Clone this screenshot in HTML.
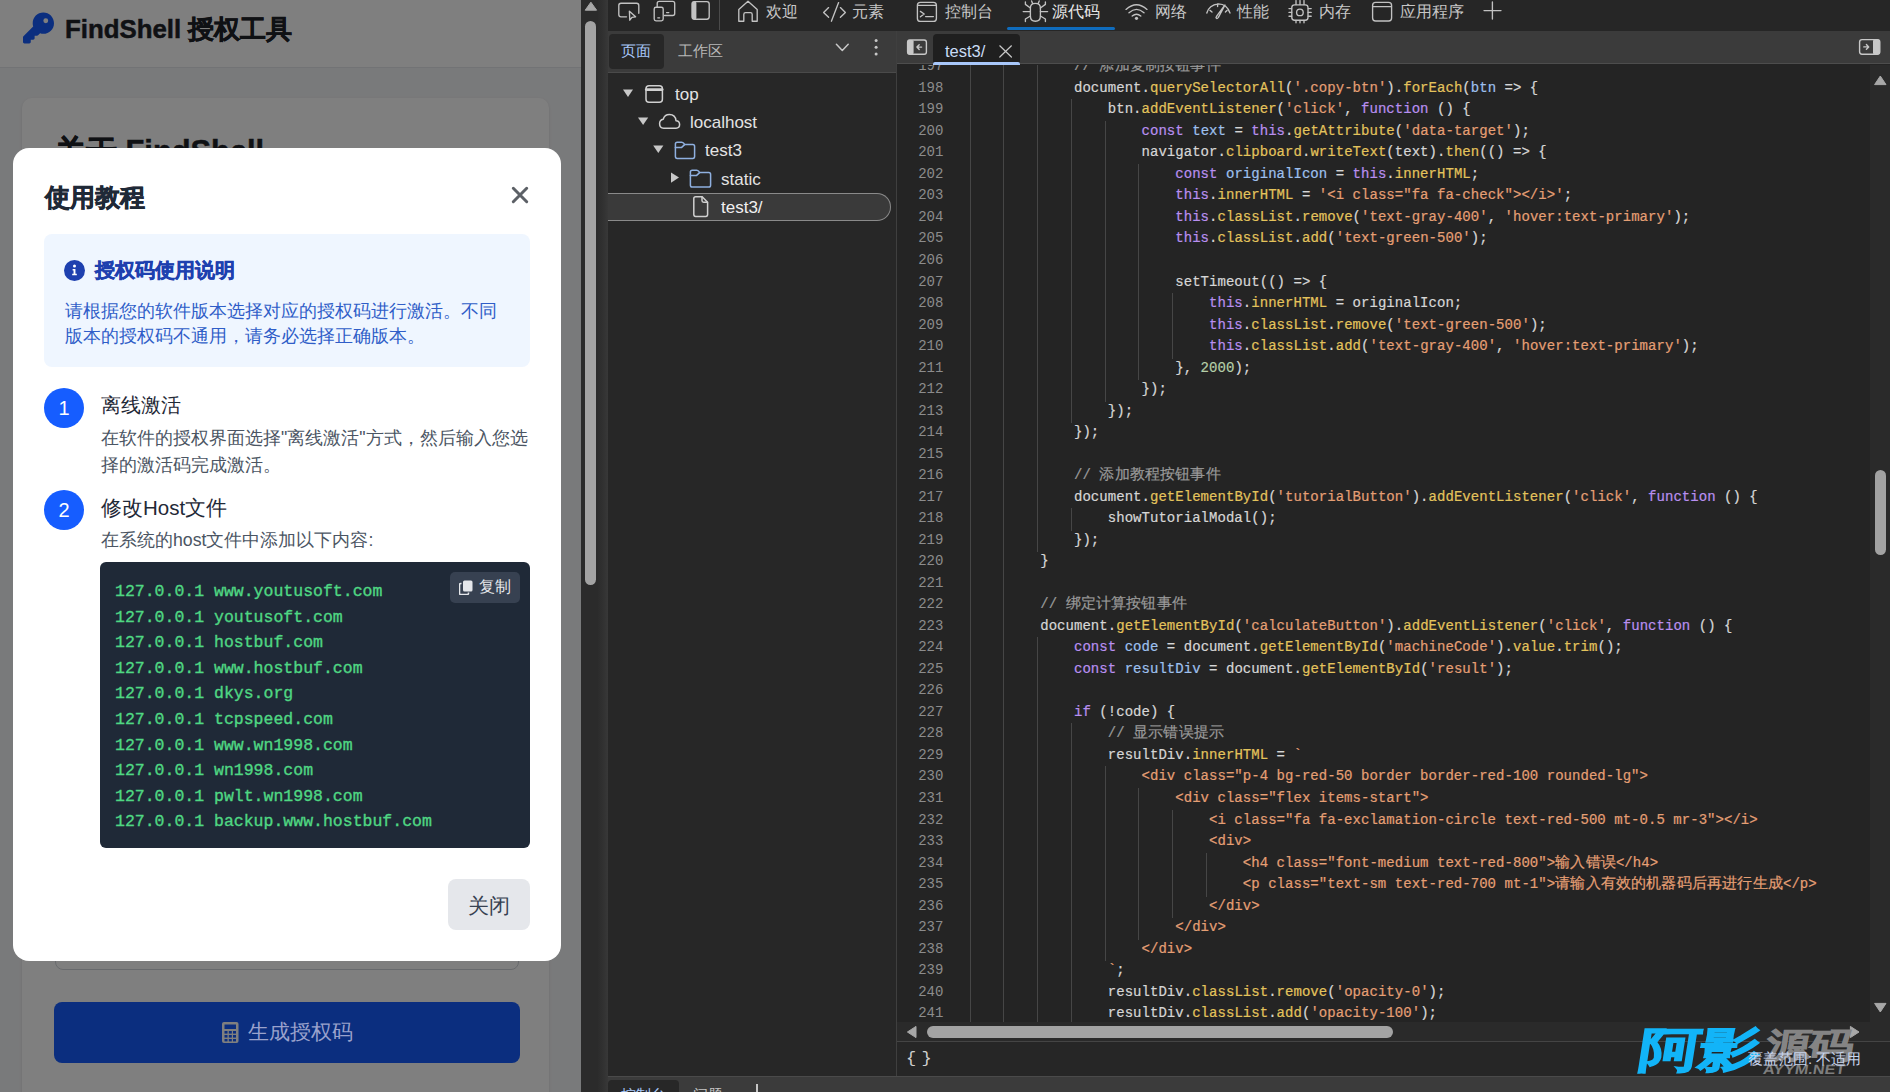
<!DOCTYPE html>
<html><head><meta charset="utf-8">
<style>
*{box-sizing:border-box;margin:0;padding:0}
html,body{width:1890px;height:1092px;overflow:hidden;background:#272727;font-family:"Liberation Sans",sans-serif}
.abs{position:absolute}
#page{position:absolute;left:0;top:0;width:581px;height:1092px;background:#f3f4f6;overflow:hidden}
#hdr{position:absolute;left:0;top:0;width:581px;height:68px;background:#fff;border-bottom:1px solid #e5e7eb}
#overlay{position:absolute;left:0;top:0;width:581px;height:1092px;background:rgba(0,0,0,0.5)}
#modal{position:absolute;left:13px;top:148px;width:548px;height:813px;background:#fff;border-radius:16px}
.t{position:absolute;white-space:nowrap;line-height:1}

#cm .ln{position:absolute;left:0;width:973px;height:21.52px}
#cm s{position:absolute;right:auto;left:0;width:46.5px;text-align:right;text-decoration:none;font-family:'Liberation Mono',monospace;font-size:14.0px;line-height:21.52px;color:#8c8c8c;letter-spacing:0.04px}
#cm u{position:absolute;top:0;width:1px;height:22.5px;background:#464646}
#cm p{position:absolute;left:75.7px;top:0;white-space:pre;font-family:'Liberation Mono',monospace;font-size:14.0px;line-height:21.52px;color:#d6d6d6;letter-spacing:0.04px;-webkit-text-stroke:0.2px currentColor}
#cm b{font-weight:normal}
#cm i.z{font-style:normal;font-size:15.2px;letter-spacing:0;display:inline-block;width:15.2px;line-height:1}
</style></head><body>
<div id="page">
  <div id="hdr">
    <svg class="abs" style="left:23px;top:12px" width="31" height="32" viewBox="0 0 512 512"><path fill="#165DFF" d="M336 352c97.2 0 176-78.8 176-176S433.2 0 336 0 160 78.8 160 176c0 18.700 2.900 36.800 8.300 53.700L7 391c-4.500 4.500-7 10.600-7 17v80c0 13.300 10.700 24 24 24h80c13.300 0 24-10.700 24-24v-40h40c13.300 0 24-10.700 24-24v-40h40c6.400 0 12.500-2.500 17-7l33.300-33.300c16.900 5.400 35 8.300 53.700 8.300zm40-256a40 40 0 1 1 0 80 40 40 0 1 1 0-80z"/></svg>
    <div class="t" style="left:65px;top:17px;font-size:25.8px;font-weight:bold;color:#1f2329;-webkit-text-stroke:0.5px #1f2329">FindShell 授权工具</div>
  </div>
  <div class="abs" style="left:22px;top:98px;width:527px;height:1100px;background:#fff;border-radius:10px;box-shadow:0 1px 3px rgba(0,0,0,0.1)"></div>
  <div class="t" style="left:55px;top:137px;font-size:30.8px;font-weight:bold;color:#1f2329;-webkit-text-stroke:0.5px #1f2329">关于 FindShell</div>
  <div class="abs" style="left:55px;top:900px;width:464px;height:70px;border:1px solid #d1d5db;border-radius:8px"></div>
  <div class="abs" style="left:54px;top:1002px;width:466px;height:61px;background:#165DFF;border-radius:8px"></div>
  <svg class="abs" style="left:222px;top:1022px" width="17" height="21" viewBox="0 0 17 21"><rect x="0" y="0" width="16.5" height="21" rx="2" fill="#fff"/><rect x="2.5" y="2.5" width="11.5" height="4.5" fill="#165DFF"/><g fill="#165DFF"><rect x="2.5" y="9" width="3" height="2.6"/><rect x="6.8" y="9" width="3" height="2.6"/><rect x="11" y="9" width="3" height="2.6"/><rect x="2.5" y="13" width="3" height="2.6"/><rect x="6.8" y="13" width="3" height="2.6"/><rect x="11" y="13" width="3" height="2.6"/><rect x="2.5" y="17" width="3" height="2.4"/><rect x="6.8" y="17" width="3" height="2.4"/><rect x="11" y="17" width="3" height="2.4"/></g></svg>
  <div id="overlay"></div>
  <div class="t" style="left:248px;top:1022px;font-size:20.5px;color:#9aa2cc">生成授权码</div>
  <div id="modal">
    <div class="t" style="left:31.5px;top:36.5px;font-size:25px;font-weight:bold;color:#1f2937;-webkit-text-stroke:0.6px #1f2937">使用教程</div>
    <svg class="abs" style="left:498px;top:38px" width="18" height="18" viewBox="0 0 18 18"><path d="M2.3 2.3L15.7 15.7M15.7 2.3L2.3 15.7" stroke="#5c6066" stroke-width="3" stroke-linecap="round"/></svg>
    <div class="abs" style="left:31px;top:86px;width:486px;height:133px;background:#eff6ff;border-radius:8px">
      <svg class="abs" style="left:20px;top:26px" width="21" height="21" viewBox="0 0 20 20"><circle cx="10" cy="10" r="10" fill="#1e40af"/><path d="M8.2 8.6H10.9V13.2H12.2V14.6H7.8V13.2H9.1V10H8.2Z" fill="#fff"/><circle cx="10" cy="5.8" r="1.45" fill="#fff"/></svg>
      <div class="t" style="left:51px;top:26px;font-size:20.4px;font-weight:bold;color:#1e40af;-webkit-text-stroke:0.5px #1e40af">授权码使用说明</div>
      <div class="abs" style="left:21px;top:64px;width:470px;white-space:nowrap;font-size:18.3px;line-height:25.3px;color:#305ec8">请根据您的软件版本选择对应的授权码进行激活。不同<br>版本的授权码不通用，请务必选择正确版本。</div>
    </div>
    <div class="abs" style="left:31px;top:240px;width:40px;height:40px;border-radius:20px;background:#165DFF;color:#fff;font-size:20px;line-height:40px;text-align:center">1</div>
    <div class="t" style="left:88px;top:248px;font-size:19.8px;color:#1f2937">离线激活</div>
    <div class="abs" style="left:88px;top:277px;width:440px;white-space:nowrap;font-size:17.7px;line-height:27.3px;color:#4b5563">在软件的授权界面选择"离线激活"方式，然后输入您选<br>择的激活码完成激活。</div>
    <div class="abs" style="left:31px;top:342px;width:40px;height:40px;border-radius:20px;background:#165DFF;color:#fff;font-size:20px;line-height:40px;text-align:center">2</div>
    <div class="t" style="left:88px;top:350px;font-size:20.5px;color:#1f2937">修改Host文件</div>
    <div class="abs" style="left:88px;top:379px;width:440px;white-space:nowrap;font-size:17.7px;line-height:27px;color:#4b5563">在系统的host文件中添加以下内容:</div>
    <div class="abs" style="left:87px;top:414px;width:430px;height:286px;background:#1f2937;border-radius:6px">
      <div class="abs" style="left:15px;top:17px;font-family:'Liberation Mono',monospace;font-size:16.5px;line-height:25.6px;color:#4fd783;white-space:pre;-webkit-text-stroke:0.35px #4fd783">127.0.0.1 www.youtusoft.com
127.0.0.1 youtusoft.com
127.0.0.1 hostbuf.com
127.0.0.1 www.hostbuf.com
127.0.0.1 dkys.org
127.0.0.1 tcpspeed.com
127.0.0.1 www.wn1998.com
127.0.0.1 wn1998.com
127.0.0.1 pwlt.wn1998.com
127.0.0.1 backup.www.hostbuf.com</div>
      <div class="abs" style="left:350px;top:10px;width:70px;height:31px;background:#374151;border-radius:5px">
        <svg class="abs" style="left:9px;top:8px" width="14" height="15" viewBox="0 0 14 15"><rect x="4" y="0.5" width="9.5" height="11" rx="1.5" fill="#e5e7eb"/><path d="M2.5 3.5H1.8Q0.5 3.5 0.5 4.8V13.2Q0.5 14.5 1.8 14.5H8.2Q9.5 14.5 9.5 13.2V12.5" stroke="#e5e7eb" stroke-width="1.6" fill="none"/></svg>
        <div class="t" style="left:29px;top:7px;font-size:16px;color:#e5e7eb">复制</div>
      </div>
    </div>
    <div class="abs" style="left:435px;top:731px;width:82px;height:51px;background:#e5e7eb;border-radius:8px"></div>
    <div class="t" style="left:455px;top:748px;font-size:20.5px;color:#374151">关闭</div>
  </div>
</div>
<div class="abs" style="left:581px;top:0;width:17px;height:1092px;background:#2b2b2b"></div>
<div class="abs" style="left:585px;top:21px;width:11px;height:564px;background:#a3a3a3;border-radius:6px"></div>
<div class="abs" style="left:598px;top:0;width:10px;height:1092px;background:linear-gradient(90deg,#2c2c2c,#303030 40%,#383838)"></div>
<svg class="abs" style="left:581px;top:0" width="17" height="14"><path d="M4.2 10.2L9.9 2.2L15.6 10.2Z" fill="#a8a8a8" stroke="#a8a8a8" stroke-linejoin="round"/></svg>

<div id="dt" class="abs" style="left:608px;top:0;width:1282px;height:1092px;background:#272727;font-family:'Liberation Sans',sans-serif">
  <!-- toolbar -->
  <div class="abs" style="left:0;top:0;width:1282px;height:31px;background:#262626"></div>
  <div class="abs" style="left:111px;top:0;width:1px;height:30px;background:#4a4a4a"></div>

  <svg class="abs" style="left:0;top:0" width="1282" height="31" viewBox="608 0 1282 31" fill="none" stroke="#c2c2c2" stroke-width="1.35" stroke-linecap="round" stroke-linejoin="round">
    <path d="M626.5 16.8H621Q618.8 16.8 618.8 14.6V5.4Q618.8 3.2 621 3.2H636.6Q638.8 3.2 638.8 5.4V13.2"/>
    <path d="M629.4 11.2L635.6 16.8L632 17.4L629.8 20.2Z"/>
    <path d="M657.2 7V3.4Q657.2 1.4 659.2 1.4H672.7Q674.7 1.4 674.7 3.4V13.5Q674.7 15.5 672.7 15.5H664.5"/>
    <rect x="654.2" y="7.2" width="9" height="13.6" rx="1.8"/>
    <path d="M657.8 17.8H659.6M666.6 12.6H668.8"/>
    <rect x="692" y="1.6" width="17.2" height="17.6" rx="2.4"/>
    <rect x="692" y="1.6" width="4.4" height="17.6" fill="#c2c2c2" stroke="none" rx="1.5"/>
    <path d="M738.8 21.2V9.4L748 1.2L757.2 9.4V21.2H752.2V14.4Q752.2 12.6 750.4 12.6H745.6Q743.8 12.6 743.8 14.4V21.2Z"/>
    <path d="M828.6 7.6L823.6 12.4L828.6 17.2M840.4 7.6L845.4 12.4L840.4 17.2M838.6 2.6L831.4 21.2"/>
    <rect x="917.4" y="2.4" width="19" height="19" rx="3"/>
    <path d="M917.6 5.4H936.2M920.4 11.4L924.2 14L920.4 16.8M925.6 16.6H933.4"/>
    <path d="M1030.4 8Q1030.4 3.4 1035.4 3.4Q1040.4 3.4 1040.4 8V16Q1040.4 21.2 1035.4 21.2Q1030.4 21.2 1030.4 16Z"/>
    <path d="M1032.6 3.6L1031.6 1M1038.2 3.6L1039.2 1M1030.4 8L1025.4 4.4V2M1040.4 8L1045.4 4.4V2M1023.2 11.6H1030.4M1040.4 11.6H1047.6M1030.4 16L1025.4 19V21.6M1040.4 16L1045.4 19V21.6"/>
    <path d="M1126 9.4Q1136.5 0 1147 9.4M1129 12.8Q1136.5 6 1144 12.8M1132.2 16Q1136.5 12.4 1140.8 16"/>
    <circle cx="1136.5" cy="18.3" r="1.6" fill="#c2c2c2" stroke="none"/>
    <path d="M1206.8 13Q1209 5 1218.4 3.8Q1227 4 1230 13M1210 10.4L1212 12M1217.6 4V6.6M1227 10.4L1225.4 12"/>
    <path d="M1225 5L1218.4 17.4Q1216.6 19.6 1216 17.6L1217 15.6Z" fill="none"/>
    <rect x="1291.8" y="4.8" width="16.2" height="15.4" rx="2.8"/>
    <circle cx="1299.9" cy="12.4" r="3.3"/>
    <path d="M1296 0.6V4.6M1300 0.6V4.6M1304 0.6V4.6M1296 20.4V22.8M1300 20.4V22.8M1304 20.4V22.8M1289 8.6H1291.6M1289 12.4H1291.6M1289 16.2H1291.6M1308.2 8.6H1311.2M1308.2 12.4H1311.2M1308.2 16.2H1311.2"/>
    <rect x="1372.6" y="2.4" width="19" height="18.6" rx="3"/>
    <path d="M1372.8 6.6H1391.4M1492.4 2V19M1484 10.6H1501"/>
  </svg>
  <div id="tbtext">
    <div class="t" style="left:158px;top:3.5px;font-size:15.7px;color:#c6c6c6">欢迎</div>
    <div class="t" style="left:244px;top:3.5px;font-size:15.7px;color:#c6c6c6">元素</div>
    <div class="t" style="left:337px;top:3.5px;font-size:15.7px;color:#c6c6c6">控制台</div>
    <div class="t" style="left:444px;top:3.5px;font-size:15.7px;color:#e8e8e8">源代码</div>
    <div class="t" style="left:547px;top:3.5px;font-size:15.7px;color:#c6c6c6">网络</div>
    <div class="t" style="left:629px;top:3.5px;font-size:15.7px;color:#c6c6c6">性能</div>
    <div class="t" style="left:711px;top:3.5px;font-size:15.7px;color:#c6c6c6">内存</div>
    <div class="t" style="left:792px;top:3.5px;font-size:15.7px;color:#c6c6c6">应用程序</div>
  </div>
  <div class="abs" style="left:399px;top:27px;width:108px;height:3px;background:#0f6cbd;border-radius:2px"></div>
  <!-- sidebar -->
  <div class="abs" style="left:0;top:31px;width:288px;height:42px;background:#3b3b3b;border-bottom:1px solid #4a4a4a"></div>
  <div class="abs" style="left:1px;top:34px;width:55px;height:35px;background:#272727;border-radius:4px"></div>
  <div class="t" style="left:13px;top:43px;font-size:15.3px;color:#a8c7fa">页面</div>
  <div class="t" style="left:70px;top:43px;font-size:15.3px;color:#b8b8b8">工作区</div>

  <svg class="abs" style="left:0;top:31px" width="288" height="41" viewBox="608 31 288 41" fill="none" stroke="#c8c8c8" stroke-width="1.5" stroke-linecap="round" stroke-linejoin="round">
    <path d="M836.4 44.2L842.3 50.4L848.2 44.2"/>
    <circle cx="876.1" cy="40.6" r="1.5" fill="#c8c8c8" stroke="none"/><circle cx="876.1" cy="47.2" r="1.5" fill="#c8c8c8" stroke="none"/><circle cx="876.1" cy="53.9" r="1.5" fill="#c8c8c8" stroke="none"/>
  </svg>
  <div class="abs" style="left:0;top:193px;width:283px;height:28px;background:#3a3a3a;border:1.5px solid #8a8a8a;border-left:none;border-radius:0 14px 14px 0"></div>
  <svg class="abs" style="left:0;top:72px" width="288" height="160" viewBox="608 72 288 160" fill="none" stroke="#d0d0d0" stroke-width="1.5" stroke-linecap="round" stroke-linejoin="round">
    <path d="M623 89.4H633L628 97Z" fill="#c8c8c8" stroke="none"/>
    <path d="M638 117.4H648.2L643.1 125Z" fill="#c8c8c8" stroke="none"/>
    <path d="M653.2 145.4H663.4L658.3 153Z" fill="#c8c8c8" stroke="none"/>
    <path d="M671 172.4V182.8L679 177.6Z" fill="#c8c8c8" stroke="none"/>
    <rect x="646" y="85.8" width="16.4" height="16.4" rx="3"/>
    <path d="M646.2 89.6H662.2" stroke-width="2.6"/>
    <path d="M663.6 128.2H676Q679.6 128.2 679.6 124.6Q679.6 121 676 120.8Q675.4 114.6 669.4 114.6Q664.6 114.6 663.2 119.2Q659.6 119.8 659.6 123.8Q659.6 128.2 663.6 128.2Z"/>
    <path d="M675.4 145.2V144Q675.4 142.2 677.2 142.2H681.6Q683 142.2 683.8 143.4L684.6 144.6H692.8Q694.6 144.6 694.6 146.4V156.6Q694.6 158.4 692.8 158.4H677.2Q675.4 158.4 675.4 156.6Z" stroke="#8fb0e0"/>
    <path d="M675.4 147.6H681.4L684.6 144.6" stroke="#8fb0e0"/>
    <path d="M690.4 173.2V172Q690.4 170.2 692.2 170.2H696.6Q698 170.2 698.8 171.4L699.6 172.6H708.8Q710.6 172.6 710.6 174.4V185.2Q710.6 187 708.8 187H692.2Q690.4 187 690.4 185.2Z" stroke="#8fb0e0"/>
    <path d="M690.4 175.6H696.4L699.6 172.6" stroke="#8fb0e0"/>
    <path d="M693.8 198.6Q693.8 196.8 695.6 196.8H702.2L707.6 202.2V214.6Q707.6 216.4 705.8 216.4H695.6Q693.8 216.4 693.8 214.6Z"/>
    <path d="M702 197V200.6Q702 202.2 703.6 202.2H707.4"/>
  </svg>
  <div class="t" style="left:67px;top:86px;font-size:17px;color:#e3e3e3">top</div>
  <div class="t" style="left:82px;top:114px;font-size:17px;color:#e3e3e3">localhost</div>
  <div class="t" style="left:97px;top:142px;font-size:17px;color:#e3e3e3">test3</div>
  <div class="t" style="left:113px;top:170.5px;font-size:17px;color:#e3e3e3">static</div>
  <div class="t" style="left:113px;top:198.5px;font-size:17px;color:#f0f0f0">test3/</div>
  <div class="abs" style="left:288px;top:31px;width:1px;height:1045px;background:#3f3f3f"></div>
  <!-- editor -->
  <div id="ed" class="abs" style="left:289px;top:31px;width:993px;height:1045px;background:#242424;overflow:hidden">
    <div class="abs" style="left:0;top:0;width:993px;height:33px;background:#3b3b3b;border-bottom:1px solid #4d4d4d"></div>
    <div class="abs" style="left:36px;top:3px;width:87px;height:31px;background:#1f1f1f;border-radius:4px 4px 0 0"></div>
    <div class="abs" style="left:36px;top:31px;width:87px;height:3px;background:#a8c7fa;border-radius:2px 2px 0 0"></div>

    <svg class="abs" style="left:0;top:0" width="993" height="34" viewBox="897 31 993 34" fill="none" stroke="#c8c8c8" stroke-width="1.4" stroke-linecap="round" stroke-linejoin="round">
      <rect x="907.6" y="40" width="18.8" height="14.2" rx="2.2"/>
      <rect x="907.6" y="40" width="6" height="14.2" rx="1.5" fill="#c8c8c8" stroke="none"/>
      <path d="M921.6 47.1H917M919.2 44.8L916.9 47.1L919.2 49.4"/>
      <path d="M999.8 45.8L1011.4 57M1011.4 45.8L999.8 57" stroke-width="1.2"/>
      <rect x="1859.6" y="39.6" width="20.2" height="14.6" rx="2.4"/>
      <rect x="1873" y="39.6" width="6.8" height="14.6" rx="1.5" fill="#c8c8c8" stroke="none"/>
      <path d="M1863.8 46.9H1868.6M1866.4 44.6L1868.7 46.9L1866.4 49.2"/>
    </svg>
    <div class="t" style="left:48px;top:12px;font-size:16.5px;color:#c9dcf5">test3/</div>
    <div id="cm" class="abs" style="left:0;top:34px;width:973px;height:957px;overflow:hidden"><div class="ln" style="top:-8.70px"><s>197</s><u style="left:72.50px"></u><u style="left:106.26px"></u><u style="left:140.02px"></u><p>            <b style="color:#9a9a9a">// <i class="z">添</i><i class="z">加</i><i class="z">复</i><i class="z">制</i><i class="z">按</i><i class="z">钮</i><i class="z">事</i><i class="z">件</i></b></p></div><div class="ln" style="top:12.82px"><s>198</s><u style="left:72.50px"></u><u style="left:106.26px"></u><u style="left:140.02px"></u><p>            document.<b style="color:#e3c35c">querySelectorAll</b>(<b style="color:#e59f74">&#x27;.copy-btn&#x27;</b>).<b style="color:#e3c35c">forEach</b>(<b style="color:#9ec0ee">btn</b> =&gt; {</p></div><div class="ln" style="top:34.34px"><s>199</s><u style="left:72.50px"></u><u style="left:106.26px"></u><u style="left:140.02px"></u><u style="left:173.78px"></u><p>                btn.<b style="color:#e3c35c">addEventListener</b>(<b style="color:#e59f74">&#x27;click&#x27;</b>, <b style="color:#b98ff0">function</b> () {</p></div><div class="ln" style="top:55.86px"><s>200</s><u style="left:72.50px"></u><u style="left:106.26px"></u><u style="left:140.02px"></u><u style="left:173.78px"></u><u style="left:207.54px"></u><p>                    <b style="color:#b98ff0">const</b> <b style="color:#9ec0ee">text</b> = <b style="color:#b98ff0">this</b>.<b style="color:#e3c35c">getAttribute</b>(<b style="color:#e59f74">&#x27;data-target&#x27;</b>);</p></div><div class="ln" style="top:77.38px"><s>201</s><u style="left:72.50px"></u><u style="left:106.26px"></u><u style="left:140.02px"></u><u style="left:173.78px"></u><u style="left:207.54px"></u><p>                    navigator.<b style="color:#e3c35c">clipboard</b>.<b style="color:#e3c35c">writeText</b>(text).<b style="color:#e3c35c">then</b>(() =&gt; {</p></div><div class="ln" style="top:98.90px"><s>202</s><u style="left:72.50px"></u><u style="left:106.26px"></u><u style="left:140.02px"></u><u style="left:173.78px"></u><u style="left:207.54px"></u><u style="left:241.30px"></u><p>                        <b style="color:#b98ff0">const</b> <b style="color:#9ec0ee">originalIcon</b> = <b style="color:#b98ff0">this</b>.<b style="color:#e3c35c">innerHTML</b>;</p></div><div class="ln" style="top:120.42px"><s>203</s><u style="left:72.50px"></u><u style="left:106.26px"></u><u style="left:140.02px"></u><u style="left:173.78px"></u><u style="left:207.54px"></u><u style="left:241.30px"></u><p>                        <b style="color:#b98ff0">this</b>.<b style="color:#e3c35c">innerHTML</b> = <b style="color:#e59f74">&#x27;&lt;i class=&quot;fa fa-check&quot;&gt;&lt;/i&gt;&#x27;</b>;</p></div><div class="ln" style="top:141.94px"><s>204</s><u style="left:72.50px"></u><u style="left:106.26px"></u><u style="left:140.02px"></u><u style="left:173.78px"></u><u style="left:207.54px"></u><u style="left:241.30px"></u><p>                        <b style="color:#b98ff0">this</b>.<b style="color:#e3c35c">classList</b>.<b style="color:#e3c35c">remove</b>(<b style="color:#e59f74">&#x27;text-gray-400&#x27;</b>, <b style="color:#e59f74">&#x27;hover:text-primary&#x27;</b>);</p></div><div class="ln" style="top:163.46px"><s>205</s><u style="left:72.50px"></u><u style="left:106.26px"></u><u style="left:140.02px"></u><u style="left:173.78px"></u><u style="left:207.54px"></u><u style="left:241.30px"></u><p>                        <b style="color:#b98ff0">this</b>.<b style="color:#e3c35c">classList</b>.<b style="color:#e3c35c">add</b>(<b style="color:#e59f74">&#x27;text-green-500&#x27;</b>);</p></div><div class="ln" style="top:184.98px"><s>206</s><u style="left:72.50px"></u><u style="left:106.26px"></u><u style="left:140.02px"></u><u style="left:173.78px"></u><u style="left:207.54px"></u><u style="left:241.30px"></u><p></p></div><div class="ln" style="top:206.50px"><s>207</s><u style="left:72.50px"></u><u style="left:106.26px"></u><u style="left:140.02px"></u><u style="left:173.78px"></u><u style="left:207.54px"></u><u style="left:241.30px"></u><p>                        setTimeout(() =&gt; {</p></div><div class="ln" style="top:228.02px"><s>208</s><u style="left:72.50px"></u><u style="left:106.26px"></u><u style="left:140.02px"></u><u style="left:173.78px"></u><u style="left:207.54px"></u><u style="left:241.30px"></u><u style="left:275.06px"></u><p>                            <b style="color:#b98ff0">this</b>.<b style="color:#e3c35c">innerHTML</b> = originalIcon;</p></div><div class="ln" style="top:249.54px"><s>209</s><u style="left:72.50px"></u><u style="left:106.26px"></u><u style="left:140.02px"></u><u style="left:173.78px"></u><u style="left:207.54px"></u><u style="left:241.30px"></u><u style="left:275.06px"></u><p>                            <b style="color:#b98ff0">this</b>.<b style="color:#e3c35c">classList</b>.<b style="color:#e3c35c">remove</b>(<b style="color:#e59f74">&#x27;text-green-500&#x27;</b>);</p></div><div class="ln" style="top:271.06px"><s>210</s><u style="left:72.50px"></u><u style="left:106.26px"></u><u style="left:140.02px"></u><u style="left:173.78px"></u><u style="left:207.54px"></u><u style="left:241.30px"></u><u style="left:275.06px"></u><p>                            <b style="color:#b98ff0">this</b>.<b style="color:#e3c35c">classList</b>.<b style="color:#e3c35c">add</b>(<b style="color:#e59f74">&#x27;text-gray-400&#x27;</b>, <b style="color:#e59f74">&#x27;hover:text-primary&#x27;</b>);</p></div><div class="ln" style="top:292.58px"><s>211</s><u style="left:72.50px"></u><u style="left:106.26px"></u><u style="left:140.02px"></u><u style="left:173.78px"></u><u style="left:207.54px"></u><u style="left:241.30px"></u><p>                        }, <b style="color:#b5cea8">2000</b>);</p></div><div class="ln" style="top:314.10px"><s>212</s><u style="left:72.50px"></u><u style="left:106.26px"></u><u style="left:140.02px"></u><u style="left:173.78px"></u><u style="left:207.54px"></u><p>                    });</p></div><div class="ln" style="top:335.62px"><s>213</s><u style="left:72.50px"></u><u style="left:106.26px"></u><u style="left:140.02px"></u><u style="left:173.78px"></u><p>                });</p></div><div class="ln" style="top:357.14px"><s>214</s><u style="left:72.50px"></u><u style="left:106.26px"></u><u style="left:140.02px"></u><p>            });</p></div><div class="ln" style="top:378.66px"><s>215</s><u style="left:72.50px"></u><u style="left:106.26px"></u><u style="left:140.02px"></u><p></p></div><div class="ln" style="top:400.18px"><s>216</s><u style="left:72.50px"></u><u style="left:106.26px"></u><u style="left:140.02px"></u><p>            <b style="color:#9a9a9a">// <i class="z">添</i><i class="z">加</i><i class="z">教</i><i class="z">程</i><i class="z">按</i><i class="z">钮</i><i class="z">事</i><i class="z">件</i></b></p></div><div class="ln" style="top:421.70px"><s>217</s><u style="left:72.50px"></u><u style="left:106.26px"></u><u style="left:140.02px"></u><p>            document.<b style="color:#e3c35c">getElementById</b>(<b style="color:#e59f74">&#x27;tutorialButton&#x27;</b>).<b style="color:#e3c35c">addEventListener</b>(<b style="color:#e59f74">&#x27;click&#x27;</b>, <b style="color:#b98ff0">function</b> () {</p></div><div class="ln" style="top:443.22px"><s>218</s><u style="left:72.50px"></u><u style="left:106.26px"></u><u style="left:140.02px"></u><u style="left:173.78px"></u><p>                showTutorialModal();</p></div><div class="ln" style="top:464.74px"><s>219</s><u style="left:72.50px"></u><u style="left:106.26px"></u><u style="left:140.02px"></u><p>            });</p></div><div class="ln" style="top:486.26px"><s>220</s><u style="left:72.50px"></u><u style="left:106.26px"></u><p>        }</p></div><div class="ln" style="top:507.78px"><s>221</s><u style="left:72.50px"></u><u style="left:106.26px"></u><p></p></div><div class="ln" style="top:529.30px"><s>222</s><u style="left:72.50px"></u><u style="left:106.26px"></u><p>        <b style="color:#9a9a9a">// <i class="z">绑</i><i class="z">定</i><i class="z">计</i><i class="z">算</i><i class="z">按</i><i class="z">钮</i><i class="z">事</i><i class="z">件</i></b></p></div><div class="ln" style="top:550.82px"><s>223</s><u style="left:72.50px"></u><u style="left:106.26px"></u><p>        document.<b style="color:#e3c35c">getElementById</b>(<b style="color:#e59f74">&#x27;calculateButton&#x27;</b>).<b style="color:#e3c35c">addEventListener</b>(<b style="color:#e59f74">&#x27;click&#x27;</b>, <b style="color:#b98ff0">function</b> () {</p></div><div class="ln" style="top:572.34px"><s>224</s><u style="left:72.50px"></u><u style="left:106.26px"></u><u style="left:140.02px"></u><p>            <b style="color:#b98ff0">const</b> <b style="color:#9ec0ee">code</b> = document.<b style="color:#e3c35c">getElementById</b>(<b style="color:#e59f74">&#x27;machineCode&#x27;</b>).<b style="color:#e3c35c">value</b>.<b style="color:#e3c35c">trim</b>();</p></div><div class="ln" style="top:593.86px"><s>225</s><u style="left:72.50px"></u><u style="left:106.26px"></u><u style="left:140.02px"></u><p>            <b style="color:#b98ff0">const</b> <b style="color:#9ec0ee">resultDiv</b> = document.<b style="color:#e3c35c">getElementById</b>(<b style="color:#e59f74">&#x27;result&#x27;</b>);</p></div><div class="ln" style="top:615.38px"><s>226</s><u style="left:72.50px"></u><u style="left:106.26px"></u><u style="left:140.02px"></u><p></p></div><div class="ln" style="top:636.90px"><s>227</s><u style="left:72.50px"></u><u style="left:106.26px"></u><u style="left:140.02px"></u><p>            <b style="color:#b98ff0">if</b> (!code) {</p></div><div class="ln" style="top:658.42px"><s>228</s><u style="left:72.50px"></u><u style="left:106.26px"></u><u style="left:140.02px"></u><u style="left:173.78px"></u><p>                <b style="color:#9a9a9a">// <i class="z">显</i><i class="z">示</i><i class="z">错</i><i class="z">误</i><i class="z">提</i><i class="z">示</i></b></p></div><div class="ln" style="top:679.94px"><s>229</s><u style="left:72.50px"></u><u style="left:106.26px"></u><u style="left:140.02px"></u><u style="left:173.78px"></u><p>                resultDiv.<b style="color:#e3c35c">innerHTML</b> = <b style="color:#e59f74">`</b></p></div><div class="ln" style="top:701.46px"><s>230</s><u style="left:72.50px"></u><u style="left:106.26px"></u><u style="left:140.02px"></u><u style="left:173.78px"></u><u style="left:207.54px"></u><p>                    <b style="color:#e59f74">&lt;div class=&quot;p-4 bg-red-50 border border-red-100 rounded-lg&quot;&gt;</b></p></div><div class="ln" style="top:722.98px"><s>231</s><u style="left:72.50px"></u><u style="left:106.26px"></u><u style="left:140.02px"></u><u style="left:173.78px"></u><u style="left:207.54px"></u><u style="left:241.30px"></u><p>                        <b style="color:#e59f74">&lt;div class=&quot;flex items-start&quot;&gt;</b></p></div><div class="ln" style="top:744.50px"><s>232</s><u style="left:72.50px"></u><u style="left:106.26px"></u><u style="left:140.02px"></u><u style="left:173.78px"></u><u style="left:207.54px"></u><u style="left:241.30px"></u><u style="left:275.06px"></u><p>                            <b style="color:#e59f74">&lt;i class=&quot;fa fa-exclamation-circle text-red-500 mt-0.5 mr-3&quot;&gt;&lt;/i&gt;</b></p></div><div class="ln" style="top:766.02px"><s>233</s><u style="left:72.50px"></u><u style="left:106.26px"></u><u style="left:140.02px"></u><u style="left:173.78px"></u><u style="left:207.54px"></u><u style="left:241.30px"></u><u style="left:275.06px"></u><p>                            <b style="color:#e59f74">&lt;div&gt;</b></p></div><div class="ln" style="top:787.54px"><s>234</s><u style="left:72.50px"></u><u style="left:106.26px"></u><u style="left:140.02px"></u><u style="left:173.78px"></u><u style="left:207.54px"></u><u style="left:241.30px"></u><u style="left:275.06px"></u><u style="left:308.82px"></u><p>                                <b style="color:#e59f74">&lt;h4 class=&quot;font-medium text-red-800&quot;&gt;<i class="z">输</i><i class="z">入</i><i class="z">错</i><i class="z">误</i>&lt;/h4&gt;</b></p></div><div class="ln" style="top:809.06px"><s>235</s><u style="left:72.50px"></u><u style="left:106.26px"></u><u style="left:140.02px"></u><u style="left:173.78px"></u><u style="left:207.54px"></u><u style="left:241.30px"></u><u style="left:275.06px"></u><u style="left:308.82px"></u><p>                                <b style="color:#e59f74">&lt;p class=&quot;text-sm text-red-700 mt-1&quot;&gt;<i class="z">请</i><i class="z">输</i><i class="z">入</i><i class="z">有</i><i class="z">效</i><i class="z">的</i><i class="z">机</i><i class="z">器</i><i class="z">码</i><i class="z">后</i><i class="z">再</i><i class="z">进</i><i class="z">行</i><i class="z">生</i><i class="z">成</i>&lt;/p&gt;</b></p></div><div class="ln" style="top:830.58px"><s>236</s><u style="left:72.50px"></u><u style="left:106.26px"></u><u style="left:140.02px"></u><u style="left:173.78px"></u><u style="left:207.54px"></u><u style="left:241.30px"></u><u style="left:275.06px"></u><p>                            <b style="color:#e59f74">&lt;/div&gt;</b></p></div><div class="ln" style="top:852.10px"><s>237</s><u style="left:72.50px"></u><u style="left:106.26px"></u><u style="left:140.02px"></u><u style="left:173.78px"></u><u style="left:207.54px"></u><u style="left:241.30px"></u><p>                        <b style="color:#e59f74">&lt;/div&gt;</b></p></div><div class="ln" style="top:873.62px"><s>238</s><u style="left:72.50px"></u><u style="left:106.26px"></u><u style="left:140.02px"></u><u style="left:173.78px"></u><u style="left:207.54px"></u><p>                    <b style="color:#e59f74">&lt;/div&gt;</b></p></div><div class="ln" style="top:895.14px"><s>239</s><u style="left:72.50px"></u><u style="left:106.26px"></u><u style="left:140.02px"></u><u style="left:173.78px"></u><p>                <b style="color:#e59f74">`</b>;</p></div><div class="ln" style="top:916.66px"><s>240</s><u style="left:72.50px"></u><u style="left:106.26px"></u><u style="left:140.02px"></u><u style="left:173.78px"></u><p>                resultDiv.<b style="color:#e3c35c">classList</b>.<b style="color:#e3c35c">remove</b>(<b style="color:#e59f74">&#x27;opacity-0&#x27;</b>);</p></div><div class="ln" style="top:938.18px"><s>241</s><u style="left:72.50px"></u><u style="left:106.26px"></u><u style="left:140.02px"></u><u style="left:173.78px"></u><p>                resultDiv.<b style="color:#e3c35c">classList</b>.<b style="color:#e3c35c">add</b>(<b style="color:#e59f74">&#x27;opacity-100&#x27;</b>);</p></div></div>
    <div class="abs" style="left:973px;top:34px;width:20px;height:957px;background:#2a2a2a"></div>
    <svg class="abs" style="left:973px;top:34px" width="20" height="957" viewBox="1870 65 20 957"><path d="M1874.6 84.6L1880.3 76L1886 84.6Z" fill="#a8a8a8" stroke="#a8a8a8" stroke-width="1" stroke-linejoin="round"/><path d="M1874.6 1003.4L1880.3 1012L1886 1003.4Z" fill="#a8a8a8" stroke="#a8a8a8" stroke-width="1" stroke-linejoin="round"/></svg>
    <div class="abs" style="left:977.5px;top:438.5px;width:11.5px;height:85px;background:#a3a3a3;border-radius:6px"></div>
    <div class="abs" style="left:0;top:991px;width:993px;height:19px;background:#2a2a2a"></div>
    <svg class="abs" style="left:0;top:991px" width="993" height="19" viewBox="897 1022 993 19"><path d="M916 1026.4L907.4 1032L916 1037.6Z" fill="#a8a8a8" stroke="#a8a8a8" stroke-width="1" stroke-linejoin="round"/><path d="M1850.4 1026.4L1859 1032L1850.4 1037.6Z" fill="#a8a8a8" stroke="#a8a8a8" stroke-width="1" stroke-linejoin="round"/></svg>
    <div class="abs" style="left:29.5px;top:995px;width:466px;height:11.5px;background:#a3a3a3;border-radius:6px"></div>
    <div class="abs" style="left:0;top:1010px;width:993px;height:1px;background:#444"></div>
    <div class="abs" style="left:0;top:1011px;width:993px;height:34px;background:#262626"></div>
    <div class="t" style="left:9px;top:1019px;font-family:'Liberation Mono',monospace;font-size:17px;color:#d0d0d0;letter-spacing:-2.5px">{ }</div>

  </div>
  <!-- bottom drawer -->
  <div class="abs" style="left:0;top:1076px;width:1282px;height:16px;background:#3b3b3b;border-top:1px solid #4a4a4a"></div>
  <div class="abs" style="left:0;top:1080px;width:71px;height:20px;background:#272727;border-radius:4px"></div>
  <div class="t" style="left:13px;top:1087px;font-size:15.3px;color:#a8c7fa">控制台</div>
  <div class="t" style="left:85px;top:1087px;font-size:15.3px;color:#c6c6c6">问题</div>
  <div class="abs" style="left:148px;top:1084px;width:1.5px;height:10px;background:#c6c6c6"></div>
</div>

<div class="abs" style="left:1636px;top:1026px;font-size:47px;font-weight:bold;color:#12b4f8;white-space:nowrap;line-height:1;-webkit-text-stroke:1.4px #12b4f8;transform:skewX(-9deg) scale(1.3,1.0);transform-origin:0 100%;letter-spacing:-1px">阿影</div>
<div class="abs" style="left:1764px;top:1028px;font-size:34px;font-weight:bold;color:#848484;white-space:nowrap;line-height:1;-webkit-text-stroke:1px #848484;transform:skewX(-9deg) scale(1.3,1);transform-origin:0 100%;letter-spacing:-1px">源码</div>
<div class="abs" style="left:1762px;top:1063px;font-size:13.5px;font-weight:bold;color:#7e7e7e;white-space:nowrap;line-height:1;transform:skewX(-9deg) scale(1.2,1);transform-origin:0 100%">AYYM.NET</div>
<div class="abs" style="left:1748px;top:1051px;font-size:15px;color:#c8d4ec;white-space:nowrap;line-height:1">覆盖范围: 不适用</div>
</body></html>
